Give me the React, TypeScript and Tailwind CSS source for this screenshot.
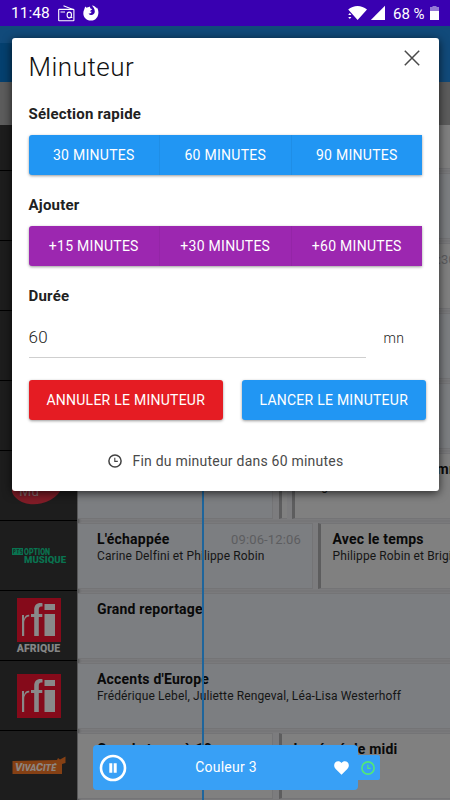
import type { ReactNode } from "react";
import clsx from "clsx";

// ── Types ───────────────────────────────────────────────────────────────────

interface Program {
  title?: string;
  hosts?: string;
  time?: string;
  className: string;
  current?: boolean;
}

interface Channel {
  id: string;
  logo?: ReactNode;
  programs: Program[];
}

// ── Icons ───────────────────────────────────────────────────────────────────

function RadioIcon() {
  return (
    <svg width="17" height="17" viewBox="0 0 17 17" fill="none" stroke="#fff" strokeWidth="1.1">
      <rect x="0.7" y="4.4" width="15.2" height="11.4" rx="0.6" />
      <path d="M5.5 0.8 15 4.4M2.5 7h4.5" />
      <ellipse cx="11.3" cy="10" rx="2.2" ry="2.9" />
      <path d="M13 12.5h1.3" />
    </svg>
  );
}

function FirefoxIcon() {
  return (
    <svg width="16" height="16" viewBox="0 0 16 16">
      <path
        fill="#fff"
        d="M2.2 1.6 3.6 2.7C4.5 2 5.6 1.8 6.3 1.9L7 1.2 7.2 3.2 9.3 4.3 7.6 5.5 7 6.6 8.7 6.7C8.3 8.2 7 8.6 5.6 8.4 6.8 10.8 11.8 10.4 11.8 6.8 11.8 4 10.5 2.4 8.8 0.6 11.2 0.8 12.8 2 13.7 3.6L13.8 2.2C17.4 7.4 14.8 15.6 8 15.6 1.4 15.6-1.2 9.2 1.2 4.6Z"
      />
    </svg>
  );
}

function StatusIcons() {
  return (
    <svg width="40" height="16" viewBox="0 0 40 16" fill="#fff">
      <path d="M1.2 4.4C6.5-0.3 14.5-0.3 20 4.4L10.6 15 6.6 10.4 4.6 8.3Z" />
      <path d="M1.2 9.9 2.8 8 4.4 9.9ZM1.2 12 2.8 13.9 4.4 12Z" />
      <path d="M38 0.8V15H23.8Z" />
    </svg>
  );
}

function ClockIcon({ size, stroke, color }: { size: number; stroke: number; color: string }) {
  return (
    <svg width={size} height={size} viewBox="0 0 14 14" fill="none" stroke={color} strokeWidth={stroke}>
      <circle cx="7" cy="7" r="6.1" />
      <path d="M6.8 3.7V7.4H9.8" strokeWidth="1.1" />
    </svg>
  );
}

// ── Channel logos ───────────────────────────────────────────────────────────

function RfiLogo() {
  return (
    <svg width="44" height="44" viewBox="0 0 44 44" className="shrink-0">
      <path fill="#850a1a" d="M0 0h44v44H0z" />
      <g fill="#898989">
        <path d="M5 17h2v4C7.8 18 9.6 16.5 12.2 16.7V18.4C9.1 18.2 7.2 21.3 7.2 25V38H5Z" />
        <path d="M14 16h3.2V12C17.2 6.8 20 4.5 25.5 5.2V8.5C22.5 8 21.8 9.2 21.8 12v4h3.5v3h-3.5V38h-4.6V19H14Z" />
        <path d="M27.5 6H38v6H27.5ZM27.5 16H38V38H27.5Z" />
      </g>
    </svg>
  );
}

function OptionMusiqueLogo() {
  return (
    <svg width="56" height="20" viewBox="0 0 56 20" fill="#097350" fontFamily="Roboto, sans-serif" fontWeight="900">
      <path d="M1 2h11v7H1z" />
      <path d="M2.5 7.5v-4h1.5v2h-1M5.5 3.5h2.5M6.7 3.5v4M11 3.7H9.3v1.7H11v1.9H9.2" fill="none" stroke="#1d1d1d" strokeWidth="0.6" />
      <text x="13" y="9" fontSize="9.6" textLength="26" lengthAdjust="spacingAndGlyphs">
        OPTION
      </text>
      <text x="13" y="17.3" fontSize="9.2" textLength="42" lengthAdjust="spacingAndGlyphs">
        MUSIQUE
      </text>
    </svg>
  );
}

function VivaciteLogo() {
  return (
    <svg width="56" height="20" viewBox="0 0 56 20">
      <path fill="#854014" d="M1.5 5 46 4 47 2 49 3.5 54.5 0.5V7L51 8V18H1.5Z" />
      <text
        x="4"
        y="15.3"
        fill="#8d8580"
        fontFamily="Roboto, sans-serif"
        fontSize="11"
        fontWeight="900"
        fontStyle="italic"
      >
        V<tspan fontSize="9">IVA</tspan>C<tspan fontSize="9">ITÉ</tspan>
      </text>
    </svg>
  );
}

function ClippedRedLogo() {
  return (
    <svg width="54" height="48" viewBox="0 0 54 48">
      <ellipse cx="25" cy="23" rx="26" ry="19" fill="#801c27" transform="rotate(-12 25 23)" />
      <text x="7" y="34" fill="#85686b" fontFamily="Roboto, sans-serif" fontSize="14">
        Mu
      </text>
    </svg>
  );
}

// ── Schedule ────────────────────────────────────────────────────────────────

const CHANNELS: Channel[] = [
  { id: "a", programs: [{ className: "w-[380px]" }] },
  { id: "b", programs: [{ className: "w-[380px]", current: true }] },
  { id: "c", programs: [{ className: "w-[390px]", time: "12:06-13:30" }] },
  { id: "d", programs: [{ className: "w-[380px]", current: true }] },
  { id: "e", programs: [{ className: "w-[380px]", current: true }] },
  {
    id: "f",
    logo: <ClippedRedLogo />,
    programs: [
      { className: "w-[195px]", current: true },
      { className: "w-[8px] ml-[6px] border-l-[3px]" },
      {
        className: "w-[165px] ml-[5px] border-l-[3px]",
        title: "Suisse grand programme",
        hosts: "Brigitte Kernel Morel",
      },
    ],
  },
  {
    id: "g",
    logo: <OptionMusiqueLogo />,
    programs: [
      {
        className: "w-[235px]",
        current: true,
        title: "L'échappée",
        hosts: "Carine Delfini et Philippe Robin",
        time: "09:06-12:06",
      },
      {
        className: "w-[300px] ml-[5px] border-l-[3px]",
        title: "Avec le temps",
        hosts: "Philippe Robin et Brigitte",
      },
    ],
  },
  {
    id: "h",
    logo: (
      <div className="flex flex-col items-center">
        <RfiLogo />
        <span className="mt-[2px] text-[10.5px] leading-[9px] font-black text-[#858585] tracking-[0.1px]">AFRIQUE</span>
      </div>
    ),
    programs: [{ className: "w-[380px]", current: true, title: "Grand reportage" }],
  },
  {
    id: "i",
    logo: <RfiLogo />,
    programs: [
      {
        className: "w-[380px]",
        current: true,
        title: "Accents d'Europe",
        hosts: "Frédérique Lebel, Juliette Rengeval, Léa-Lisa Westerhoff",
      },
    ],
  },
  {
    id: "j",
    logo: <VivaciteLogo />,
    programs: [
      { className: "w-[195px]", title: "Grands tours à 10", time: "09:05-12:55" },
      {
        className: "w-[200px] ml-[6px] border-l-[3px]",
        title: "La récré de midi",
        hosts: "Valérie et LYN",
      },
    ],
  },
];

function ProgramCard({ program }: { program: Program }) {
  const bar = program.className.includes("border-l");

  return (
    <div
      className={clsx(
        "h-[66px] shrink-0 border-y border-y-[#747476] overflow-hidden whitespace-nowrap",
        program.className,
        program.current ? "bg-[#7c7e81]" : "bg-[#808080]",
        bar ? "border-l-[#5d5d5e]" : "border-r border-r-[#747476] pl-[19px]",
        bar && program.title && "pl-[11.5px]",
      )}
    >
      <div className="relative mt-[5.5px] h-[18.5px] text-[14px] leading-[19px] font-bold text-[#090909] tracking-[0.2px]">
        {program.title}
        {program.time && (
          <span className="absolute right-[11px] top-0 text-[13px] font-normal text-[#5c5d60] tracking-[0.15px]">
            {program.time}
          </span>
        )}
      </div>
      <div className="text-[12px] leading-[16px] text-[#151515] tracking-[0.12px]">{program.hosts}</div>
    </div>
  );
}

function ChannelRow({ channel, first }: { channel: Channel; first: boolean }) {
  return (
    <div className={clsx("flex shrink-0", first ? "h-[46px] items-end overflow-hidden" : "h-[70px]")}>
      <div className="w-[77px] h-full shrink-0 bg-[#1d1d1d] border-b border-black flex items-center justify-center">
        {channel.logo}
      </div>
      <div className="h-[70px] flex-1 flex pt-[2px] pl-px overflow-hidden shadow-[inset_3px_0_3px_-1px_rgba(0,0,0,0.35)]">
        {channel.programs.map((program, i) => (
          <ProgramCard key={i} program={program} />
        ))}
      </div>
    </div>
  );
}

// ── Timer dialog ────────────────────────────────────────────────────────────

function ButtonGroup({ labels, color }: { labels: string[]; color: string }) {
  return (
    <div
      className={clsx(
        "w-[393.5px] h-10 flex rounded-l-[3px] shadow-[0_1px_3px_rgba(0,0,0,0.4)] text-white text-[14px] tracking-[0.28px]",
        color,
      )}
    >
      {labels.map((label, i) => (
        <button key={label} className={clsx("flex-1 pt-px", i > 0 && "border-l border-black/5")}>
          {label}
        </button>
      ))}
    </div>
  );
}

function TimerDialog() {
  return (
    <div className="absolute left-[11.5px] top-[38px] w-[427.5px] h-[452.5px] rounded-[3px] bg-white shadow-[0_2px_10px_rgba(0,0,0,0.7)] pl-[17px] text-[#212121]">
      <div className="flex justify-between h-[62px]">
        <h1 className="pt-[12px] text-[26px] leading-[34px] font-light tracking-[0.5px] text-[#111]">Minuteur</h1>
        <svg width="16" height="16" viewBox="0 0 16 16" className="mt-[12px] mr-[19px]" stroke="#4a4a4a" strokeWidth="1.5">
          <path d="M0.8 0.8 15.2 15.2M15.2 0.8 0.8 15.2" />
        </svg>
      </div>

      <h2 className="h-[35px] pt-[4px] text-[15px] leading-[20px] font-bold tracking-[0.22px]">Sélection rapide</h2>
      <ButtonGroup labels={["30 MINUTES", "60 MINUTES", "90 MINUTES"]} color="bg-[#2196f3]" />

      <h2 className="h-[51px] pt-[20px] text-[15px] leading-[20px] font-bold tracking-[0.22px]">Ajouter</h2>
      <ButtonGroup labels={["+15 MINUTES", "+30 MINUTES", "+60 MINUTES"]} color="bg-[#9c27b0]" />

      <h2 className="h-[41px] pt-[20px] text-[15px] leading-[20px] font-bold tracking-[0.22px]">Durée</h2>
      <div className="flex items-center h-[51px]">
        <div className="w-[337px] h-full border-b border-[#cfcfcf] pt-[18px] text-[17px] leading-[24px] font-light tracking-[0.3px] text-[#222]">
          60
        </div>
        <span className="pl-[18px] pt-[11px] text-[14px] font-light text-[#222] tracking-[0.3px]">mn</span>
      </div>

      <div className="mt-[22px] flex gap-[18.5px] text-white text-[14px] tracking-[0.25px]">
        <button className="w-[194.5px] h-10 rounded-[3px] bg-[#e51c23] shadow-[0_1px_3px_rgba(0,0,0,0.4)]">
          ANNULER LE MINUTEUR
        </button>
        <button className="w-[184.5px] h-10 rounded-[3px] bg-[#2196f3] shadow-[0_1px_3px_rgba(0,0,0,0.4)]">
          LANCER LE MINUTEUR
        </button>
      </div>

      <div className="mt-[30px] flex items-center pl-[79px] text-[14px] leading-[22px] text-[#4a4a4a] tracking-[0.22px]">
        <ClockIcon size={14} stroke={1.5} color="#424242" />
        <span className="ml-[11px]">Fin du minuteur dans 60 minutes</span>
      </div>
    </div>
  );
}

// ── Player ──────────────────────────────────────────────────────────────────

function PlayerBar() {
  return (
    <div className="absolute left-[93px] top-[745px] flex items-center">
      <div className="w-[265px] h-[45px] rounded-[4px] bg-[#38a0f6] flex items-center pl-[6px] pr-[9px]">
        <svg width="28" height="28" viewBox="0 0 28 28">
          <circle cx="14" cy="14" r="12" fill="none" stroke="#fff" strokeWidth="2.6" />
          <path d="M10.3 9.3h3v9.4h-3zM14.7 9.3h3v9.4h-3z" fill="#fff" />
        </svg>
        <span className="flex-1 pr-[9px] text-center text-[14px] tracking-[0.25px] text-white">Couleur 3</span>
        <svg width="15" height="14" viewBox="0 0 15 14">
          <path fill="#fff" d="M7.5 13.7 1.7 8C-0.3 6-0.2 3 1.2 1.5 3-0.4 6-0.2 7.5 2 9-0.2 12-0.4 13.8 1.5 15.2 3 15.3 6 13.3 8Z" />
        </svg>
      </div>
      <div className="w-[22px] h-[25px] rounded-r-[2px] bg-[#38a0f6] flex items-center pl-[3px]">
        <ClockIcon size={14} stroke={1.6} color="#52e878" />
      </div>
    </div>
  );
}

// ── App ─────────────────────────────────────────────────────────────────────

export default function App() {
  return (
    <div className="relative w-[450px] h-[800px] overflow-hidden flex flex-col bg-[#7c7c7e] font-['Roboto',sans-serif]">
      <div className="h-[26px] shrink-0 bg-[#3900b1] flex items-center text-white">
        <span className="w-[58px] pl-[11px] pt-[2px] text-[15.5px]">11:48</span>
        <RadioIcon />
        <span className="ml-[8px]">
          <FirefoxIcon />
        </span>
        <div className="ml-auto flex items-center pr-[11px]">
          <StatusIcons />
          <span className="ml-[6px] pt-[2px] w-[37px] text-[15px] whitespace-nowrap">68 %</span>
          <svg width="9" height="14" viewBox="0 0 9 14" className="block">
            <path d="M2.5 0h4v1H9v4H0V1h2.5z" fill="#9478d6" />
            <path d="M0 5h9v9H0z" fill="#fff" />
          </svg>
        </div>
      </div>
      <div className="h-[56px] shrink-0 bg-[#114a7a] flex items-end">
        <div className="w-[77px] h-[39px] bg-[#04406f]" />
      </div>
      <div className="h-[43px] shrink-0 bg-[#5c5c5c]" />
      <div className="flex flex-col">
        {CHANNELS.map((channel, i) => (
          <ChannelRow key={channel.id} channel={channel} first={i === 0} />
        ))}
      </div>
      <div className="absolute left-[202px] top-[125px] bottom-0 w-[2px] bg-[#1e659c]" />
      <TimerDialog />
      <PlayerBar />
    </div>
  );
}
